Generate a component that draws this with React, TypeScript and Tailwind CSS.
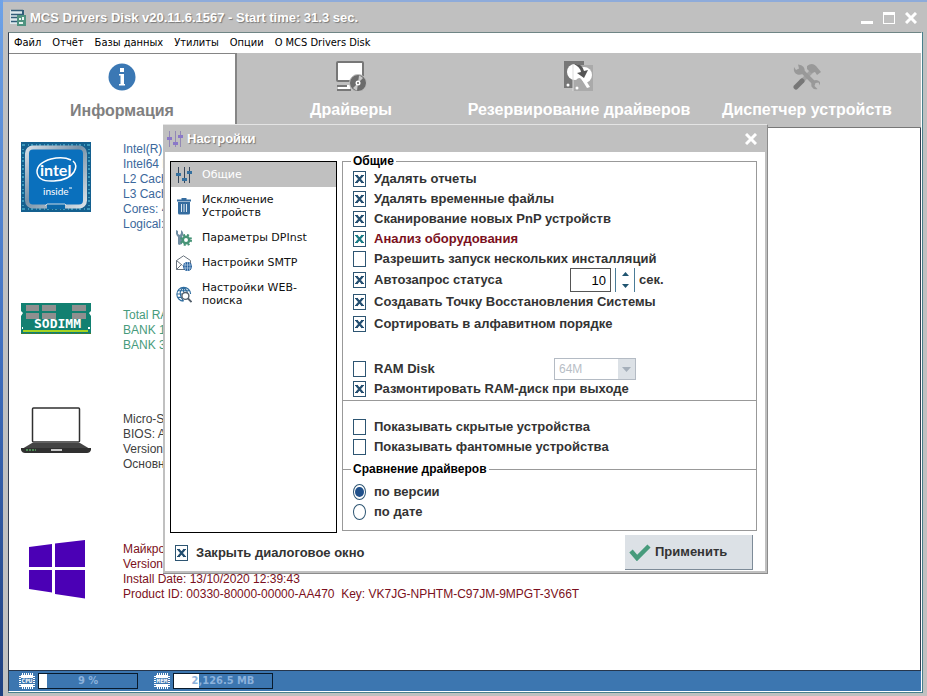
import clsx from 'clsx'
import type { ReactNode } from 'react'

const menu = ['Файл', 'Отчёт', 'Базы данных', 'Утилиты', 'Опции', 'О MCS Drivers Disk']

const tabs = [
  { name: 'Информация', icon: <InfoIcon />, active: true },
  { name: 'Драйверы', icon: <ComputerIcon /> },
  { name: 'Резервирование драйверов', icon: <BackupIcon /> },
  { name: 'Диспетчер устройств', icon: <ToolsIcon /> },
]

const sections = [
  { name: 'Общие', icon: <SlidersIcon />, active: true },
  { name: 'Исключение Устройств', icon: <TrashIcon /> },
  { name: 'Параметры DPInst', icon: <GearIcon /> },
  { name: 'Настройки SMTP', icon: <MailIcon /> },
  { name: 'Настройки WEB-поиска', icon: <WebIcon /> },
]

function InfoIcon() {
  return (
    <svg width="28" height="28" viewBox="0 0 28 28">
      <circle cx="14" cy="14" r="13.500" fill="#3b78b4" />
      <path d="M12 5h4v4h-4zM11 11h5v10h1v1.500h-6V21h1.500v-8.500H11z" fill="#fff" />
    </svg>
  )
}

function ComputerIcon() {
  return (
    <svg width="32" height="30" viewBox="0 0 32 30">
      <rect x="2" y="1" width="26" height="19" rx="1" fill="#fff" stroke="#777" strokeWidth="2" />
      <path d="M3 24h12v5H3z" fill="#fff" />
      <path d="M2 25h10M2 29h14" stroke="#777" strokeWidth="2" />
      <circle cx="23" cy="22" r="8.500" fill="#6c6c6c" stroke="#c0c0c0" />
      <path d="M23 22L24 14.500A8 8 0 0 1 28 17zM23 22L22 29.500A8 8 0 0 1 18 27z" fill="#c8c8c8" />
      <circle cx="23" cy="22" r="2.500" fill="#fff" />
      <circle cx="23" cy="22" r="1" fill="#666" />
    </svg>
  )
}

function BackupIcon() {
  return (
    <svg width="30" height="30" viewBox="0 0 30 30">
      <path d="M0 0h20v4h9v26H9v-3H0z" fill="#777" />
      <path d="M9 4h20v26H9z" fill="#aaa" />
      <circle cx="11" cy="11" r="8" fill="#fff" />
      <circle cx="20" cy="14" r="8" fill="#fff" />
      <path d="M9 4v26" stroke="#ddd" />
      <path d="M12 21q0-4 4-4l3 3 4 6-2 2-4-6z" fill="#aaa" />
      <path d="M18 19l3-1 5 8-3 1z" fill="#fff" />
      <path d="M10 3q8-1 10 7l4-1-4 8-7-5 4-1q-1-5-7-8z" fill="#555" />
      <circle cx="4" cy="24" r="1.500" fill="#fff" />
      <circle cx="13" cy="27" r="1.500" fill="#fff" />
    </svg>
  )
}

function ToolsIcon() {
  return (
    <svg width="28" height="28" viewBox="0 0 28 28" fill="none">
      <path d="M20 8L8 20" stroke="#a2a2a2" strokeWidth="4" />
      <path d="M14 4q5-4 9 0l5 6-4 3-2-3-4 1-4-4z" fill="#999" />
      <path d="M9 19L3 25" stroke="#777" strokeWidth="5" strokeLinecap="round" />
      <path d="M8 8l13 13" stroke="#999" strokeWidth="4" />
      <path d="M5 2.500l1 4-3 1.500-2-3q-1 6 3.500 7.500 5 1 7-3 1-6-6.500-7zM27 20q-3-3-6-1.500-3.500 2-2.500 6 2 3.500 6 2.500l-3-3 1-3 3-.5 1.500 3z" fill="#999" />
    </svg>
  )
}

function SlidersIcon({ violet }: { violet?: boolean }) {
  const line = violet ? '#9389b5' : '#36465a'
  const knob = violet ? '#8a78c8' : '#336f9f'
  return (
    <svg width="16" height="16" viewBox="0 0 16 16">
      <path d="M2.500 0v16M8.500 0v16M13.500 0v16" stroke={line} />
      <path d="M0 6h5v3H0zM6 11h5v3H6zM11 4h5v3h-5z" fill={knob} />
    </svg>
  )
}

function TrashIcon() {
  return (
    <svg width="16" height="17" viewBox="0 0 16 17">
      <path d="M2 4h12v11q0 1.500-1.500 1.500h-9Q2 16.500 2 15z" fill="#346c9f" />
      <path d="M5.500 6v8M8 6v8M10.500 6v8" stroke="#dbe8f2" />
      <path d="M1 2.500h14M5.500 1h5" stroke="#346c9f" strokeWidth="2" />
    </svg>
  )
}

function GearIcon() {
  return (
    <svg width="16" height="16" viewBox="0 0 16 16">
      <path d="M0 0l2 1v3l2 1 1-2V0q3 2 2 5L6 7v7l-3 1-1-1V7Q-1 4 0 0z" fill="#6f8da2" />
      <circle cx="10" cy="10" r="5" fill="none" stroke="#479477" strokeWidth="2" strokeDasharray="2 2" />
      <circle cx="10" cy="10" r="3.200" fill="#fff" stroke="#479477" strokeWidth="2.500" />
    </svg>
  )
}

function MailIcon() {
  return (
    <svg width="16" height="16" viewBox="0 0 16 16" fill="none">
      <path d="M.5 5.500L7.500.8l7 4.700v9H.5zM.5 14.500L5.500 9.500M.5 5.500l6 5" stroke="#69737d" />
      <circle cx="11.500" cy="11.500" r="4.500" fill="#245f9c" />
      <path d="M7.500 10h8M7.500 13h8M11.500 7v9M9.500 8q-1 3.500 0 7M13.500 8q1 3.500 0 7" stroke="#b7d0e6" strokeWidth=".7" />
    </svg>
  )
}

function WebIcon() {
  return (
    <svg width="17" height="17" viewBox="0 0 17 17" fill="none">
      <path d="M15.500 8A7.300 7.300 0 1 0 8 15.500M1 8h6M2 4.500h12M2 11.500h4M8 1v5M8 1Q4 4 4.500 8T8 15.500M8 1q4 3 4 6" stroke="#2f6d9f" strokeWidth="1.200" />
      <circle cx="10" cy="10" r="3.700" fill="#fff" stroke="#55616d" strokeWidth="1.500" />
      <path d="M12.500 12.500l4 4" stroke="#55616d" strokeWidth="2" />
    </svg>
  )
}

function AppIcon() {
  return (
    <svg width="16" height="17" viewBox="0 0 16 17">
      <path d="M0 1h14v14H0z" fill="#dde9ec" />
      <path d="M1 1.500h12M1 5.500h12M1 8.500h7M1 12.500h7" stroke="#315d78" strokeWidth="1.500" />
      <path d="M13 1v5" stroke="#315d78" strokeWidth="2" />
      <path d="M7 6h9v11H7z" fill="#4f9380" />
      <path d="M9 9h2v2H9zM12 8h2v3h-2zM9 13h4v2H9z" fill="#e8f4ef" />
    </svg>
  )
}

function CloseIcon() {
  return (
    <svg width="12" height="12" viewBox="0 0 12 12">
      <path d="M1 1l10 10M11 1L1 11" stroke="#fff" strokeWidth="3" />
    </svg>
  )
}

function IntelLogo() {
  return (
    <svg width="70" height="70" viewBox="0 0 70 70">
      <defs>
        <linearGradient id="metal" x1="0" y1="0" x2="1" y2="1">
          <stop offset="0" stopColor="#d5dee6" />
          <stop offset=".45" stopColor="#7892a8" />
          <stop offset="1" stopColor="#d9e2e8" />
        </linearGradient>
      </defs>
      <path d="M0 0h70v70H0z" fill="#14608f" />
      <path d="M2 3h66M2 67h66M2 2v66M68 2v66" stroke="#3d9abd" strokeWidth="2" strokeDasharray="2 3 1 2" />
      <rect x="6" y="5.500" width="58" height="59" rx="6" fill="#0a70bd" stroke="url(#metal)" strokeWidth="4" />
      <path d="M26 64.500h18" stroke="#0b68a9" strokeWidth="5" />
      <path d="M24 64l2-2h18l2 2" fill="none" stroke="#c9d8e2" />
      <path d="M50 18q-8-4-20-1-14 4-14 13 1 10 17 9 15-1 20-9 4-7-1-11" fill="none" stroke="#fff" strokeWidth="1.500" />
      <text x="19" y="34" fill="#fff" fontFamily="Lato, sans-serif" fontWeight="700" fontSize="16">intel</text>
      <text x="22" y="53" fill="#fff" fontFamily="Lato, sans-serif" fontSize="10">inside</text>
      <path d="M48 46h3" stroke="#fff" />
    </svg>
  )
}

function SodimmLogo() {
  return (
    <svg width="70" height="32" viewBox="0 0 70 32">
      <path d="M0 0h70v8l-2 2 2 3v18H0V13l2-3-2-2z" fill="#128071" />
      <path d="M5 2h13v6H5zM21 2h14v6H21zM51 2h14v6H51zM5 10h13v6H5zM21 10h14v6H21zM51 10h14v6H51z" fill="#8f8f8f" />
      <path d="M2 28h65" stroke="#a5d321" strokeWidth="2" />
      <path d="M0 30.500h70" stroke="#4a7c2c" strokeDasharray="2 1" />
      <path d="M1 25h1M67 25h2" stroke="#fff" strokeWidth="2" />
      <text x="13" y="25" fill="#fff" fontFamily="DejaVu Sans Mono, monospace" fontWeight="700" fontSize="13">SODIMM</text>
    </svg>
  )
}

function LaptopLogo() {
  return (
    <svg width="70" height="46" viewBox="0 0 70 46">
      <rect x="11.500" y="1" width="47" height="34" rx="1" fill="#fff" stroke="#303030" strokeWidth="1.500" />
      <path d="M11 36h48l10 6H1z" fill="#444" />
      <path d="M0 41h70v2q-1 3-4 3H4q-3 0-4-3z" fill="#303030" />
      <path d="M5 43h10" stroke="#57a860" strokeWidth="1.500" strokeDasharray="2 1" />
      <path d="M30 42h11v2H30z" fill="#c8c8c8" />
    </svg>
  )
}

function WindowsLogo() {
  return (
    <svg width="70" height="60" viewBox="0 0 70 60" fill="#4b00b5">
      <path d="M8 7l23-3v23H8zM34 3.500L64 0v27H34zM8 30h23v22.500L8 49zM34 30h30v28.500L34 54z" />
    </svg>
  )
}

function ChipIcon({ label }: { label: string }) {
  return (
    <svg width="16" height="16" viewBox="0 0 16 16">
      <path d="M2 2h12v12H2z" fill="#fff" />
      <path d="M3 1h11M3 15h11M1 3v11M15 3v11" stroke="#fff" strokeWidth="2" strokeDasharray="1 1" />
      <path d="M2 5h12v6H2z" fill="#3c76b0" />
      <text x="8" y="10" fill="#fff" textAnchor="middle" fontFamily="DejaVu Sans Mono, monospace" fontWeight="700" fontSize="6">{label}</text>
    </svg>
  )
}

const devices = [
  {
    logo: <IntelLogo />,
    row: 'h-[161px] text-[#3b689c]',
    lines: ['Intel(R) Core', 'Intel64 Family', 'L2 Cache', 'L3 Cache', 'Cores: 4', 'Logical: 8'],
  },
  { logo: <SodimmLogo />, row: 'h-[104px] text-[#479b7c]', text: 'pt-[5px]', lines: ['Total RAM', 'BANK 1', 'BANK 3'] },
  {
    logo: <LaptopLogo />,
    row: 'h-[133px] text-[#404040]',
    text: 'pt-[5px]',
    lines: ['Micro-Star', 'BIOS: AMI', 'Version: 1', 'Основная'],
  },
  {
    logo: <WindowsLogo />,
    row: 'text-[#7b1020]',
    text: 'pt-[2px]',
    lines: [
      'Майкрософт',
      'Version: 10',
      'Install Date: 13/10/2020 12:39:43',
      'Product ID: 00330-80000-00000-AA470  Key: VK7JG-NPHTM-C97JM-9MPGT-3V66T',
    ],
  },
]

function Check({ children, checked, red, tall }: { children: ReactNode; checked?: boolean; red?: boolean; tall?: boolean }) {
  return (
    <label className={clsx('flex items-center gap-2', tall ? 'h-[22px]' : 'h-5', red && 'text-[#7b101c]')}>
      <span className="relative h-4 w-[13px]">
        <input
          type="checkbox"
          defaultChecked={checked}
          className="peer block h-4 w-[13px] appearance-none border border-[#2d5572] bg-white"
        />
        <svg viewBox="0 0 13 16" className="pointer-events-none absolute inset-0 hidden peer-checked:block">
          <path
            d="M3.500 4.500l6 7M9.500 4.500l-6 7"
            fill="none"
            stroke={red ? '#187a85' : '#234e70'}
            strokeWidth="2.200"
          />
          <path d="M2 4.500h3M8 4.500h3M2 11.500h3M8 11.500h3" stroke={red ? '#187a85' : '#234e70'} />
        </svg>
      </span>
      {children}
    </label>
  )
}

function Radio({ children, checked }: { children: ReactNode; checked?: boolean }) {
  return (
    <label className="flex h-5 items-center gap-2">
      <span className="relative h-4 w-[13px]">
        <input
          type="radio"
          name="compare"
          defaultChecked={checked}
          className="peer block h-4 w-[13px] appearance-none rounded-[50%] border border-[#2d5572] bg-white"
        />
        <span className="pointer-events-none absolute inset-x-[2px] inset-y-[3px] hidden rounded-[50%] bg-[#20508a] peer-checked:block" />
      </span>
      {children}
    </label>
  )
}

function Settings() {
  return (
    <section
      aria-labelledby="settings-title"
      className="absolute top-[124px] left-[163px] flex w-[605px] flex-col border-t border-r border-b border-t-[#e4e4e4] border-r-[#8c8c8c] border-b-[#8c8c8c] bg-[#c0c0c0] pr-[2px] pb-[2px] pl-[2px]"
    >
      <header className="flex h-[27px] items-center pr-2 pl-[2px] text-white">
        <SlidersIcon violet />
        <h2 id="settings-title" className="ml-1 flex-1 text-[13px] font-bold [text-shadow:1px_1px_1px_#777]">Настройки</h2>
        <button aria-label="Закрыть"><CloseIcon /></button>
      </header>
      <div className="bg-white pr-2 pb-px pl-[5px] text-[13px] font-bold text-[#333]">
        <div className="flex gap-[5px] pt-[2px]">
          <nav className="mt-[7px] w-[167px] shrink-0 border border-black font-['DejaVu_Sans',sans-serif] text-[11px] leading-[13px] font-normal text-[#111]">
            {sections.map((item) => (
              <a
                key={item.name}
                href="#"
                className={clsx(
                  'flex items-center gap-[10px] py-[6px] pr-6 pl-[5px]',
                  item.active && 'bg-[#c0c0c0] text-white',
                )}
              >
                <span className="-my-1 flex w-4 shrink-0 justify-center">{item.icon}</span>
                {item.name}
              </a>
            ))}
          </nav>
          <div className="flex-1 pb-[2px]">
            <fieldset className="h-[246px] border border-b-0 border-[#999] pl-[10px]">
              <legend className="mb-px ml-[-2px] px-[2px] text-[12px] leading-[14px] text-black">Общие</legend>
              <Check checked>Удалять отчеты</Check>
              <Check checked>Удалять временные файлы</Check>
              <Check checked>Сканирование новых PnP устройств</Check>
              <Check checked red>Анализ оборудования</Check>
              <Check>Разрешить запуск нескольких инсталляций</Check>
              <div className="flex h-[22px] items-center">
                <div className="w-[217px]"><Check checked tall>Автозапрос статуса</Check></div>
                <input
                  aria-label="Интервал"
                  defaultValue="10"
                  className="h-6 w-[41px] border border-[#555] pr-1 text-right text-[13px] font-normal text-black"
                />
                <div className="mx-1 flex h-6 w-5 flex-col border-x border-[#4a7c98]">
                  <button aria-label="Больше" className="flex flex-1 items-center justify-center">
                    <svg width="7" height="4" viewBox="0 0 7 4"><path d="M0 4l3.500-4L7 4z" fill="#1f5470" /></svg>
                  </button>
                  <button aria-label="Меньше" className="flex flex-1 items-center justify-center">
                    <svg width="7" height="4" viewBox="0 0 7 4"><path d="M0 0h7L3.500 4z" fill="#1f5470" /></svg>
                  </button>
                </div>
                сек.
              </div>
              <Check checked tall>Создавать Точку Восстановления Системы</Check>
              <Check checked tall>Сортировать в алфавитном порядке</Check>
              <div className="mt-6 flex h-5 items-center">
                <div className="w-[201px]"><Check>RAM Disk</Check></div>
                <span className="relative">
                  <select
                    aria-label="Размер RAM-диска"
                    disabled
                    className="block h-[22px] w-[82px] appearance-none border border-[#b4bbc4] bg-white pl-1 text-[12px] font-normal text-[#b8bec6]"
                  >
                    <option>64M</option>
                  </select>
                  <span className="pointer-events-none absolute inset-y-px right-px flex w-[17px] items-center justify-center bg-[#dce1e6]">
                    <svg width="9" height="5" viewBox="0 0 9 5"><path d="M0 0h9L4.500 5z" fill="#a5afba" /></svg>
                  </span>
                </span>
              </div>
              <Check checked>Размонтировать RAM-диск при выходе</Check>
            </fieldset>
            <div className="border-x border-[#999]">
              <div className="h-[62px] border-t border-[#999] pt-4 pl-[10px]">
                <Check>Показывать скрытые устройства</Check>
                <Check>Показывать фантомные устройства</Check>
              </div>
              <fieldset className="border-y border-[#999] pb-2 pl-[10px]">
                <legend className="mb-[6px] ml-[-2px] px-[2px] text-[12px] leading-[14px] text-black">Сравнение драйверов</legend>
                <Radio checked>по версии</Radio>
                <Radio>по дате</Radio>
              </fieldset>
            </div>
          </div>
        </div>
        <footer className="mt-[2px] flex items-center justify-between pr-1 pl-[5px]">
          <Check checked>Закрыть диалоговое окно</Check>
          <button className="flex h-[35px] w-32 items-center gap-1 border-r border-b border-[#7d8b98] bg-[#dce1e6] pl-1">
            <svg width="22" height="18" viewBox="0 0 22 18">
              <path d="M2 8l6 7L20 3" fill="none" stroke="#479b7c" strokeWidth="4.500" />
            </svg>
            Применить
          </button>
        </footer>
      </div>
    </section>
  )
}

function Meter({ label, value, width }: { label: string; value: string; width: number }) {
  return (
    <div className="flex items-center gap-[3px]">
      <ChipIcon label={label} />
      <div className="relative h-4 w-[100px] border border-[#081a2c]">
        <div className="h-full bg-white" style={{ width }} />
        <span className="absolute inset-0 text-center text-[11px] leading-[14px] font-bold text-[#8cb2dc]">{value}</span>
      </div>
    </div>
  )
}

export default function App() {
  return (
    <div className="relative flex min-h-screen flex-col bg-linear-to-b from-[#6fa3e8] via-[#3f6fc0] to-[#1f4080] pl-[3px] font-['Liberation_Sans',Arial,sans-serif]">
      <div className="flex flex-1 flex-col border-t-2 border-[#8eabda] bg-[#c0c0c0]">
        <header className="flex h-[30px] items-center pt-px pr-[10px] pl-[7px] text-white">
          <AppIcon />
          <h1 className="ml-1 flex-1 text-[13px] font-bold [text-shadow:1px_1px_1px_#777]">
            MCS Drivers Disk v20.11.6.1567 - Start time: 31.3 sec.
          </h1>
          <div className="flex gap-[10px]">
            <button aria-label="Свернуть" className="flex h-3 w-3 items-end"><span className="h-[3px] w-full bg-white" /></button>
            <button aria-label="Развернуть" className="h-3 w-3 border border-t-[3px] border-white" />
            <button aria-label="Закрыть"><CloseIcon /></button>
          </div>
        </header>
        <div className="mr-[4px] mb-[3px] ml-[5px] flex flex-1 flex-col border-r border-b border-[#47808c]">
          <div className="flex flex-1 flex-col border border-t-[#6f8585] border-r-white border-b-white border-l-[#333d50] bg-white">
            <nav className="flex h-5 items-center gap-[11px] pl-[5px] font-['DejaVu_Sans_Condensed','DejaVu_Sans',sans-serif] text-[11px] text-black">
              {menu.map((name) => (
                <a key={name} href="#">{name}</a>
              ))}
            </nav>
            <nav className="grid h-[75px] grid-cols-4 bg-[#c0c0c0] text-[16px] font-bold text-white">
              {tabs.map((tab) => (
                <a
                  key={tab.name}
                  href="#"
                  className={clsx(
                    'flex flex-col items-center pt-[7px] whitespace-nowrap',
                    tab.active ? 'border-t border-r-2 border-[#858585] bg-white text-[#808080]' : 'border-b border-[#777]',
                  )}
                >
                  <span className="flex h-8 items-center">{tab.icon}</span>
                  <span className="mt-[6px] leading-6">{tab.name}</span>
                </a>
              ))}
            </nav>
            <main className="flex-1 border-r border-[#333d50] bg-white pt-[14px] pl-3 text-[12px] leading-[15px]">
              {devices.map((device) => (
                <div key={device.lines[0]} className={clsx('flex gap-8', device.row)}>
                  <div className="w-[70px]">{device.logo}</div>
                  <div className={clsx('whitespace-pre', device.text)}>
                    {device.lines.map((line) => (
                      <p key={line}>{line}</p>
                    ))}
                  </div>
                </div>
              ))}
            </main>
            <footer className="flex h-[21px] items-center gap-4 border-t border-[#26364c] bg-[#3c76b0] pl-[10px] font-['DejaVu_Sans_Condensed','DejaVu_Sans',sans-serif]">
              <Meter label="CPU" value="9 %" width={8} />
              <Meter label="MEM" value="2,126.5 MB" width={25} />
            </footer>
          </div>
        </div>
      </div>
      <Settings />
    </div>
  )
}
